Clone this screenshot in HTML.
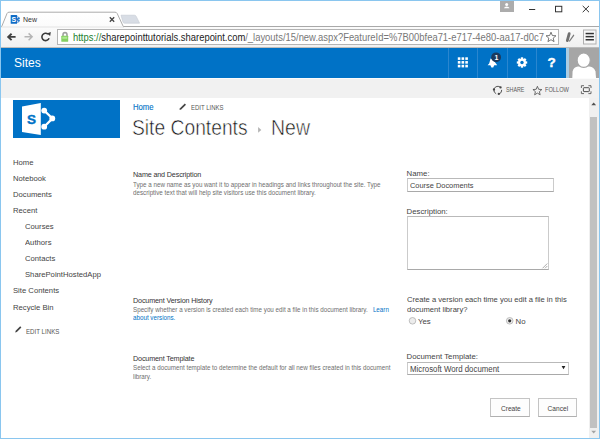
<!DOCTYPE html>
<html><head><meta charset="utf-8"><title>New</title>
<style>
html,body{margin:0;padding:0;}
body{width:600px;height:439px;overflow:hidden;position:relative;background:#fff;font-family:"Liberation Sans",sans-serif;}
.t{position:absolute;white-space:nowrap;}
.r{position:absolute;}
</style></head><body>
<div class="r" style="left:1px;top:27px;width:598px;height:21px;background:linear-gradient(#fbfbfb,#f0f0f0);"></div>
<div class="r" style="left:1px;top:26px;width:598px;height:1px;background:#a9a9a9;"></div>
<div class="r" style="left:1px;top:47px;width:598px;height:1px;background:#bcbcbc;"></div>
<svg class="r" style="left:0;top:0" width="600" height="48" viewBox="0 0 600 48">
<defs><linearGradient id="tg" x1="0" y1="0" x2="0" y2="1"><stop offset="0" stop-color="#ffffff"/><stop offset="1" stop-color="#fbfbfb"/></linearGradient></defs>
<path d="M1.5,27 L7,13.5 Q7.6,12.2 9,12.2 L115,12.2 Q116.5,12.2 117.2,13.5 L123.5,27 Z" fill="url(#tg)" stroke="#a3a3a3" stroke-width="0.9"/>
<rect x="1.6" y="26.3" width="121.6" height="1.4" fill="#fbfbfb"/>
<path d="M121,15.2 L134.5,15.2 Q135.6,15.2 136.1,16.2 L139.6,23.2 L124.5,23.2 Q123.4,23.2 123,22.2 Z" fill="#d8dde5" stroke="#c4c9d1" stroke-width="0.6"/>
<!-- favicon -->
<circle cx="16.9" cy="19.5" r="3.1" fill="#1a73c9"/>
<circle cx="17.6" cy="17.6" r="0.8" fill="#cfe3f5"/><circle cx="19.3" cy="19.5" r="0.8" fill="#cfe3f5"/><circle cx="17.6" cy="21.4" r="0.8" fill="#cfe3f5"/>
<rect x="10.7" y="15" width="6.4" height="8.8" rx="0.6" fill="#0f6cc6"/>
<text x="11.6" y="22" font-size="7" font-family="Liberation Sans" font-weight="bold" fill="#fff">S</text>
<!-- close x -->
<path d="M109.8,17.3 L114.2,21.7 M114.2,17.3 L109.8,21.7" stroke="#444" stroke-width="1.3"/>
<!-- profile icon -->
<rect x="500" y="1" width="14" height="11" fill="#acacac"/>
<circle cx="506.7" cy="4.6" r="1.5" fill="#fff"/>
<path d="M504,8.2 Q504.3,6.5 506.7,6.5 Q509.1,6.5 509.4,8.2 Z" fill="#fff"/>
<!-- minimize -->
<rect x="529" y="9" width="6.2" height="1" fill="#333"/>
<!-- maximize -->
<rect x="555.5" y="6.3" width="6.3" height="5.5" fill="none" stroke="#333" stroke-width="1"/>
<!-- close -->
<path d="M582.7,5.9 L589,12.2 M589,5.9 L582.7,12.2" stroke="#333" stroke-width="1"/>
<!-- back arrow -->
<path d="M15.6,36.9 L8.4,36.9 M11.6,33.7 L8.2,36.9 L11.6,40.1" fill="none" stroke="#404040" stroke-width="1.9"/>
<!-- fwd arrow -->
<path d="M24.5,36.8 L31.8,36.8 M28.6,33.4 L32.1,36.8 L28.6,40.2" fill="none" stroke="#b5b5b5" stroke-width="1.5"/>
<!-- reload -->
<path d="M49.08,38.17 A3.7,3.7 0 1 1 47.98,34.07" fill="none" stroke="#3a3a3a" stroke-width="1.6"/>
<path d="M46.8,33.4 L50.8,31.9 L50.2,36.0 Z" fill="#3a3a3a"/>
<!-- omnibox -->
<rect x="57.5" y="29.5" width="501" height="15" fill="#fff" stroke="#b4b4b4" stroke-width="1"/>
<!-- lock -->
<path d="M63,36 L63,34.8 Q63,32.6 65,32.6 Q67,32.6 67,34.8 L67,36" fill="none" stroke="#a0a0a0" stroke-width="1.6"/>
<rect x="61.3" y="35.7" width="6.9" height="6.1" rx="0.5" fill="#86d062"/>
<rect x="62.3" y="36.8" width="4.9" height="2" fill="#aee890"/>
<!-- star -->
<path d="M551.00,32.20 L552.35,35.54 L555.95,35.79 L553.19,38.11 L554.06,41.61 L551.00,39.70 L547.94,41.61 L548.81,38.11 L546.05,35.79 L549.65,35.54 Z" fill="#fff" stroke="#555" stroke-width="0.8" stroke-linejoin="round"/>
<!-- extension -->
<path d="M567.3,40.6 L569.2,33.6" stroke="#6f6f6f" stroke-width="2.8" stroke-linecap="round"/>
<path d="M569.6,41 L573.6,35.3" stroke="#7a7a7a" stroke-width="1.3" stroke-linecap="round"/>
<!-- menu -->
<rect x="583.5" y="30" width="12.5" height="14" fill="#f7f7f7" stroke="#b0b0b0" stroke-width="1"/>
<rect x="585.6" y="32.8" width="8.3" height="1.5" fill="#333"/>
<rect x="585.6" y="35.9" width="8.3" height="1.5" fill="#333"/>
<rect x="585.6" y="39" width="8.3" height="1.5" fill="#333"/>
</svg>
<div class="t" style="left:22.9px;top:16.23px;font-size:8px;line-height:8px;color:#333;transform:scaleX(0.87);transform-origin:0 0;">New</div>
<div class="t" style="left:73px;top:32.95px;font-size:10.1px;line-height:10.1px;color:#222;transform:scaleX(0.933);transform-origin:0 0;"><span style="color:#1a802e">https://</span><span style="color:#222">sharepointtutorials.sharepoint.com</span><span style="color:#777">/_layouts/15/new.aspx?FeatureId=%7B00bfea71-e717-4e80-aa17-d0c7</span></div>
<div class="r" style="left:1px;top:48px;width:598px;height:30px;background:#0072c6;"></div>
<div class="t" style="left:14px;top:56.54px;font-size:12px;line-height:12px;color:#fff;">Sites</div>
<div class="r" style="left:448px;top:48px;width:1px;height:30px;background:#2a86cf;"></div>
<div class="r" style="left:477px;top:48px;width:1px;height:30px;background:#2a86cf;"></div>
<div class="r" style="left:507px;top:48px;width:1px;height:30px;background:#2a86cf;"></div>
<div class="r" style="left:536px;top:48px;width:1px;height:30px;background:#2a86cf;"></div>
<div class="r" style="left:566px;top:48px;width:3px;height:30px;background:#abcde3;"></div>
<div class="r" style="left:569px;top:48px;width:30px;height:30px;background:#a6a6a6;"></div>
<svg class="r" style="left:440px;top:48px" width="160" height="30" viewBox="440 48 160 30">
<!-- tiles -->
<g fill="#fff">
<rect x="457.80" y="57.30" width="2.6" height="2.6"/><rect x="457.80" y="61.05" width="2.6" height="2.6"/><rect x="457.80" y="64.80" width="2.6" height="2.6"/><rect x="461.55" y="57.30" width="2.6" height="2.6"/><rect x="461.55" y="61.05" width="2.6" height="2.6"/><rect x="461.55" y="64.80" width="2.6" height="2.6"/><rect x="465.30" y="57.30" width="2.6" height="2.6"/><rect x="465.30" y="61.05" width="2.6" height="2.6"/><rect x="465.30" y="64.80" width="2.6" height="2.6"/>
</g>
<!-- bell -->
<path d="M490.6,58.6 Q492.5,59 494.5,61.5 L497.2,65.3 L487.6,65.3 L489.2,63.5 Z" fill="#fff"/>
<path d="M490.3,65 L494.3,65 L493.2,67.6 L491.4,67.6 Z" fill="#fff"/>
<circle cx="496.1" cy="57.3" r="4.9" fill="#1b3a5e"/>
<text x="494.4" y="60" font-size="7" font-family="Liberation Sans" font-weight="bold" fill="#fff">1</text>
<!-- gear -->
<g transform="translate(522,62.5)" fill="#fff">
<circle r="3.9"/>
<rect x="-1.15" y="-5.2" width="2.3" height="2.2" transform="rotate(0)"/><rect x="-1.15" y="-5.2" width="2.3" height="2.2" transform="rotate(45)"/><rect x="-1.15" y="-5.2" width="2.3" height="2.2" transform="rotate(90)"/><rect x="-1.15" y="-5.2" width="2.3" height="2.2" transform="rotate(135)"/><rect x="-1.15" y="-5.2" width="2.3" height="2.2" transform="rotate(180)"/><rect x="-1.15" y="-5.2" width="2.3" height="2.2" transform="rotate(225)"/><rect x="-1.15" y="-5.2" width="2.3" height="2.2" transform="rotate(270)"/><rect x="-1.15" y="-5.2" width="2.3" height="2.2" transform="rotate(315)"/>
<circle r="1.7" fill="#0072c6"/>
</g>
<!-- help -->
<text x="547.5" y="67.2" font-size="13.5" font-family="Liberation Sans" font-weight="bold" fill="#fff" stroke="#fff" stroke-width="0.4">?</text>
<!-- avatar -->
<path d="M572.3,78 L572.6,71.5 Q573.5,66.8 578,66.5 L589.5,66.5 Q594,66.8 595.5,71.5 L596,78 Z" fill="#fff"/>
<ellipse cx="583.7" cy="60.2" rx="6.6" ry="7.2" fill="#fff" stroke="#a6a6a6" stroke-width="1.2"/>
</svg>
<div class="r" style="left:1px;top:78px;width:598px;height:1px;background:#fbfbfb;"></div>
<div class="r" style="left:1px;top:79px;width:598px;height:19px;background:#f1f1f1;"></div>
<svg class="r" style="left:480px;top:78px" width="120" height="20" viewBox="480 78 120 20">
<!-- share icon -->
<g fill="none" stroke="#555" stroke-width="1">
<path d="M494.14,88.87 A3.9,3.9 0 0 1 500.56,87.44"/>
<path d="M501.69,89.86 A3.9,3.9 0 0 1 498.81,93.97"/>
<path d="M496.15,93.73 A3.9,3.9 0 0 1 493.96,89.52"/>
</g>
<circle cx="500.56" cy="87.44" r="1.15" fill="#444"/><circle cx="498.81" cy="93.97" r="1.15" fill="#444"/><circle cx="493.96" cy="89.52" r="1.15" fill="#444"/>
<!-- star -->
<path d="M537.40,86.30 L538.63,89.30 L541.87,89.55 L539.40,91.65 L540.16,94.80 L537.40,93.10 L534.64,94.80 L535.40,91.65 L532.93,89.55 L536.17,89.30 Z" fill="none" stroke="#555" stroke-width="0.85" stroke-linejoin="round"/>
<!-- focus icon -->
<path d="M581.4,88 L581.4,85.7 L584,85.7 M588.4,85.7 L591,85.7 L591,88 M591,91.3 L591,93.6 L588.4,93.6 M584,93.6 L581.4,93.6 L581.4,91.3" fill="none" stroke="#5a5a5a" stroke-width="0.9"/>
<rect x="583.4" y="87.7" width="5.9" height="3.9" rx="0.6" fill="none" stroke="#505050" stroke-width="1"/>
</svg>
<div class="t" style="left:505.7px;top:87.31px;font-size:6.6px;line-height:6.6px;color:#5a5a5a;transform:scaleX(0.81);transform-origin:0 0;">SHARE</div>
<div class="t" style="left:544.9px;top:87.31px;font-size:6.6px;line-height:6.6px;color:#5a5a5a;transform:scaleX(0.86);transform-origin:0 0;">FOLLOW</div>
<div class="r" style="left:589px;top:98px;width:10px;height:340px;background:#f0f0f0;"></div>
<div class="r" style="left:590px;top:117px;width:7.3px;height:311px;background:#c1c1c1;"></div>
<svg class="r" style="left:589px;top:98px" width="10" height="340" viewBox="589 98 10 340">
<path d="M591.3,105.2 L593.7,102.6 L596.1,105.2 Z" fill="#505050"/>
<path d="M591.3,430.8 L593.7,433.4 L596.1,430.8 Z" fill="#a3a3a3"/>
</svg>
<div class="r" style="left:13px;top:100px;width:107px;height:38px;background:#0072c6;"></div>
<svg class="r" style="left:13px;top:100px" width="107" height="38" viewBox="13 100 107 38">
<g fill="none" stroke="#fff" stroke-width="2.2">
<path d="M44.2,110.6 L52.5,118.4 L44.2,126.7"/>
</g>
<circle cx="44.2" cy="110.6" r="2.9" fill="#fff"/>
<circle cx="52.3" cy="118.4" r="2.9" fill="#fff"/>
<circle cx="44.2" cy="126.7" r="2.9" fill="#fff"/>
<path d="M22,106.5 L40.8,103 L40.8,135 L22,132 Z" fill="#fff"/>
<text x="26.9" y="124.3" font-size="13.5" font-family="Liberation Sans" font-weight="bold" fill="#0072c6" stroke="#0072c6" stroke-width="0.4">S</text>
</svg>
<div class="t" style="left:132.8px;top:103.27px;font-size:8.3px;line-height:8.3px;color:#0072c6;-webkit-text-stroke:0.12px #0072c6;transform:scaleX(0.93);transform-origin:0 0;">Home</div>
<svg class="r" style="left:178px;top:102px" width="10" height="10" viewBox="178 102 10 10">
<path d="M179.5,110 L180,108.3 L184.8,103.5 L186,104.7 L181.2,109.5 Z" fill="#444"/>
</svg>
<div class="t" style="left:190.8px;top:104.84px;font-size:6.8px;line-height:6.8px;color:#555;transform:scaleX(0.88);transform-origin:0 0;">EDIT LINKS</div>
<div class="t" style="left:132.4px;top:117.88px;font-size:21.4px;line-height:21.4px;color:#151515;-webkit-text-stroke:0.55px #fff;transform:scaleX(0.9);transform-origin:0 0;">Site Contents</div>
<svg class="r" style="left:256px;top:125px" width="8" height="10" viewBox="256 125 8 10"><path d="M258.1,127 L261.3,129.9 L258.1,132.8 Z" fill="#b3b3b3"/></svg>
<div class="t" style="left:270.6px;top:117.88px;font-size:21.4px;line-height:21.4px;color:#151515;-webkit-text-stroke:0.55px #fff;transform:scaleX(0.91);transform-origin:0 0;">New</div>
<div class="t" style="left:13px;top:159.23px;font-size:8px;line-height:8px;color:#444;transform:scaleX(0.96);transform-origin:0 0;">Home</div>
<div class="t" style="left:13px;top:175.26px;font-size:8px;line-height:8px;color:#444;transform:scaleX(0.96);transform-origin:0 0;">Notebook</div>
<div class="t" style="left:13px;top:191.29px;font-size:8px;line-height:8px;color:#444;transform:scaleX(0.96);transform-origin:0 0;">Documents</div>
<div class="t" style="left:13px;top:207.32px;font-size:8px;line-height:8px;color:#444;transform:scaleX(0.96);transform-origin:0 0;">Recent</div>
<div class="t" style="left:24.8px;top:223.35px;font-size:8px;line-height:8px;color:#444;transform:scaleX(0.96);transform-origin:0 0;">Courses</div>
<div class="t" style="left:24.8px;top:239.38px;font-size:8px;line-height:8px;color:#444;transform:scaleX(0.96);transform-origin:0 0;">Authors</div>
<div class="t" style="left:24.8px;top:255.41px;font-size:8px;line-height:8px;color:#444;transform:scaleX(0.96);transform-origin:0 0;">Contacts</div>
<div class="t" style="left:24.8px;top:271.44px;font-size:8px;line-height:8px;color:#444;transform:scaleX(0.96);transform-origin:0 0;">SharePointHostedApp</div>
<div class="t" style="left:13px;top:287.47px;font-size:8px;line-height:8px;color:#444;transform:scaleX(0.96);transform-origin:0 0;">Site Contents</div>
<div class="t" style="left:13px;top:303.50px;font-size:8px;line-height:8px;color:#444;transform:scaleX(0.96);transform-origin:0 0;">Recycle Bin</div>
<svg class="r" style="left:13px;top:324px" width="10" height="10" viewBox="13 324 10 10">
<path d="M15.2,332.5 L15.7,330.8 L20.2,326.3 L21.4,327.5 L16.9,332 Z" fill="#444"/>
</svg>
<div class="t" style="left:26px;top:327.51px;font-size:7.2px;line-height:7.2px;color:#555;transform:scaleX(0.855);transform-origin:0 0;">EDIT LINKS</div>
<div class="t" style="left:133px;top:170.81px;font-size:7.2px;line-height:7.2px;color:#333;letter-spacing:-0.15px;">Name and Description</div>
<div class="t" style="left:133px;top:181.70px;font-size:6.5px;line-height:6.5px;color:#6e6e6e;transform:scaleX(0.96);transform-origin:0 0;">Type a new name as you want it to appear in headings and links throughout the site. Type</div>
<div class="t" style="left:133px;top:189.50px;font-size:6.5px;line-height:6.5px;color:#6e6e6e;transform:scaleX(0.96);transform-origin:0 0;">descriptive text that will help site visitors use this document library.</div>
<div class="t" style="left:133px;top:296.51px;font-size:7.2px;line-height:7.2px;color:#333;letter-spacing:-0.15px;">Document Version History</div>
<div class="t" style="left:133px;top:306.70px;font-size:6.5px;line-height:6.5px;color:#6e6e6e;transform:scaleX(0.96);transform-origin:0 0;">Specify whether a version is created each time you edit a file in this document library. &nbsp; <span style="color:#0072c6">Learn</span></div>
<div class="t" style="left:133px;top:315.30px;font-size:6.5px;line-height:6.5px;color:#0072c6;transform:scaleX(0.96);transform-origin:0 0;">about versions.</div>
<div class="t" style="left:133px;top:354.81px;font-size:7.2px;line-height:7.2px;color:#333;letter-spacing:-0.15px;">Document Template</div>
<div class="t" style="left:133px;top:364.80px;font-size:6.5px;line-height:6.5px;color:#6e6e6e;transform:scaleX(0.96);transform-origin:0 0;">Select a document template to determine the default for all new files created in this document</div>
<div class="t" style="left:133px;top:373.50px;font-size:6.5px;line-height:6.5px;color:#6e6e6e;transform:scaleX(0.96);transform-origin:0 0;">library.</div>
<div class="t" style="left:406.6px;top:169.90px;font-size:7.8px;line-height:7.8px;color:#444;letter-spacing:0px;">Name:</div>
<div class="r" style="left:407px;top:178px;width:147px;height:14px;background:#fff;border:1px solid;border-color:#b9b9b9 #cbcbcb #a9a9a9 #cbcbcb;box-sizing:border-box;"></div>
<div class="t" style="left:410.3px;top:182.40px;font-size:7.8px;line-height:7.8px;color:#444;transform:scaleX(0.95);transform-origin:0 0;">Course Docoments</div>
<div class="t" style="left:406.6px;top:207.50px;font-size:7.8px;line-height:7.8px;color:#444;letter-spacing:0px;">Description:</div>
<div class="r" style="left:407px;top:216px;width:142px;height:54px;background:#fff;border:1px solid;border-color:#b9b9b9 #cbcbcb #a9a9a9 #cbcbcb;box-sizing:border-box;"></div>
<svg class="r" style="left:540px;top:261px" width="10" height="10" viewBox="540 261 10 10">
<path d="M542.5,268.3 L547.3,263.5 M545,268.3 L547.3,266" stroke="#888" stroke-width="0.7"/>
</svg>
<div class="t" style="left:406.6px;top:296.40px;font-size:7.8px;line-height:7.8px;color:#444;transform:scaleX(0.975);transform-origin:0 0;">Create a version each time you edit a file in this</div>
<div class="t" style="left:406.6px;top:306.20px;font-size:7.8px;line-height:7.8px;color:#444;transform:scaleX(0.975);transform-origin:0 0;">document library?</div>
<svg class="r" style="left:405px;top:314px" width="120" height="14" viewBox="405 314 120 14">
<circle cx="412.5" cy="320.8" r="3.3" fill="#ececec" stroke="#a8a8a8" stroke-width="0.7"/>
<circle cx="509.7" cy="320.8" r="3.3" fill="#ececec" stroke="#a8a8a8" stroke-width="0.7"/>
<circle cx="509.7" cy="320.8" r="1.6" fill="#333"/>
</svg>
<div class="t" style="left:418px;top:318.00px;font-size:7.8px;line-height:7.8px;color:#444;">Yes</div>
<div class="t" style="left:515.5px;top:318.00px;font-size:7.8px;line-height:7.8px;color:#444;">No</div>
<div class="t" style="left:406.6px;top:353.10px;font-size:7.8px;line-height:7.8px;color:#444;letter-spacing:0px;">Document Template:</div>
<div class="r" style="left:407px;top:362px;width:162px;height:13px;background:#fff;border:1px solid;border-color:#b9b9b9 #cbcbcb #a9a9a9 #cbcbcb;box-sizing:border-box;"></div>
<div class="t" style="left:410px;top:364.57px;font-size:8.3px;line-height:8.3px;color:#444;transform:scaleX(0.945);transform-origin:0 0;">Microsoft Word document</div>
<svg class="r" style="left:560px;top:364px" width="8" height="8" viewBox="560 364 8 8">
<path d="M561.6,366 L565.4,366 L563.5,369.2 Z" fill="#222"/>
</svg>
<div class="r" style="left:490px;top:398px;width:40px;height:19px;background:#fdfdfd;border:1px solid;border-color:#c4c4c4 #c4c4c4 #b0b0b0 #c4c4c4;box-sizing:border-box;"></div>
<div class="r" style="left:538px;top:398px;width:39px;height:19px;background:#fdfdfd;border:1px solid;border-color:#c4c4c4 #c4c4c4 #b0b0b0 #c4c4c4;box-sizing:border-box;"></div>
<div class="t" style="left:501px;top:406.01px;font-size:6.6px;line-height:6.6px;color:#444;">Create</div>
<div class="t" style="left:547.6px;top:406.01px;font-size:6.6px;line-height:6.6px;color:#444;">Cancel</div>
<div class="r" style="left:0px;top:0px;width:600px;height:1px;background:#8ac6ef;"></div>
<div class="r" style="left:0px;top:438px;width:600px;height:1px;background:#8ac6ef;"></div>
<div class="r" style="left:0px;top:0px;width:1px;height:439px;background:#8ac6ef;"></div>
<div class="r" style="left:599px;top:0px;width:1px;height:439px;background:#8ac6ef;"></div>
</body></html>
